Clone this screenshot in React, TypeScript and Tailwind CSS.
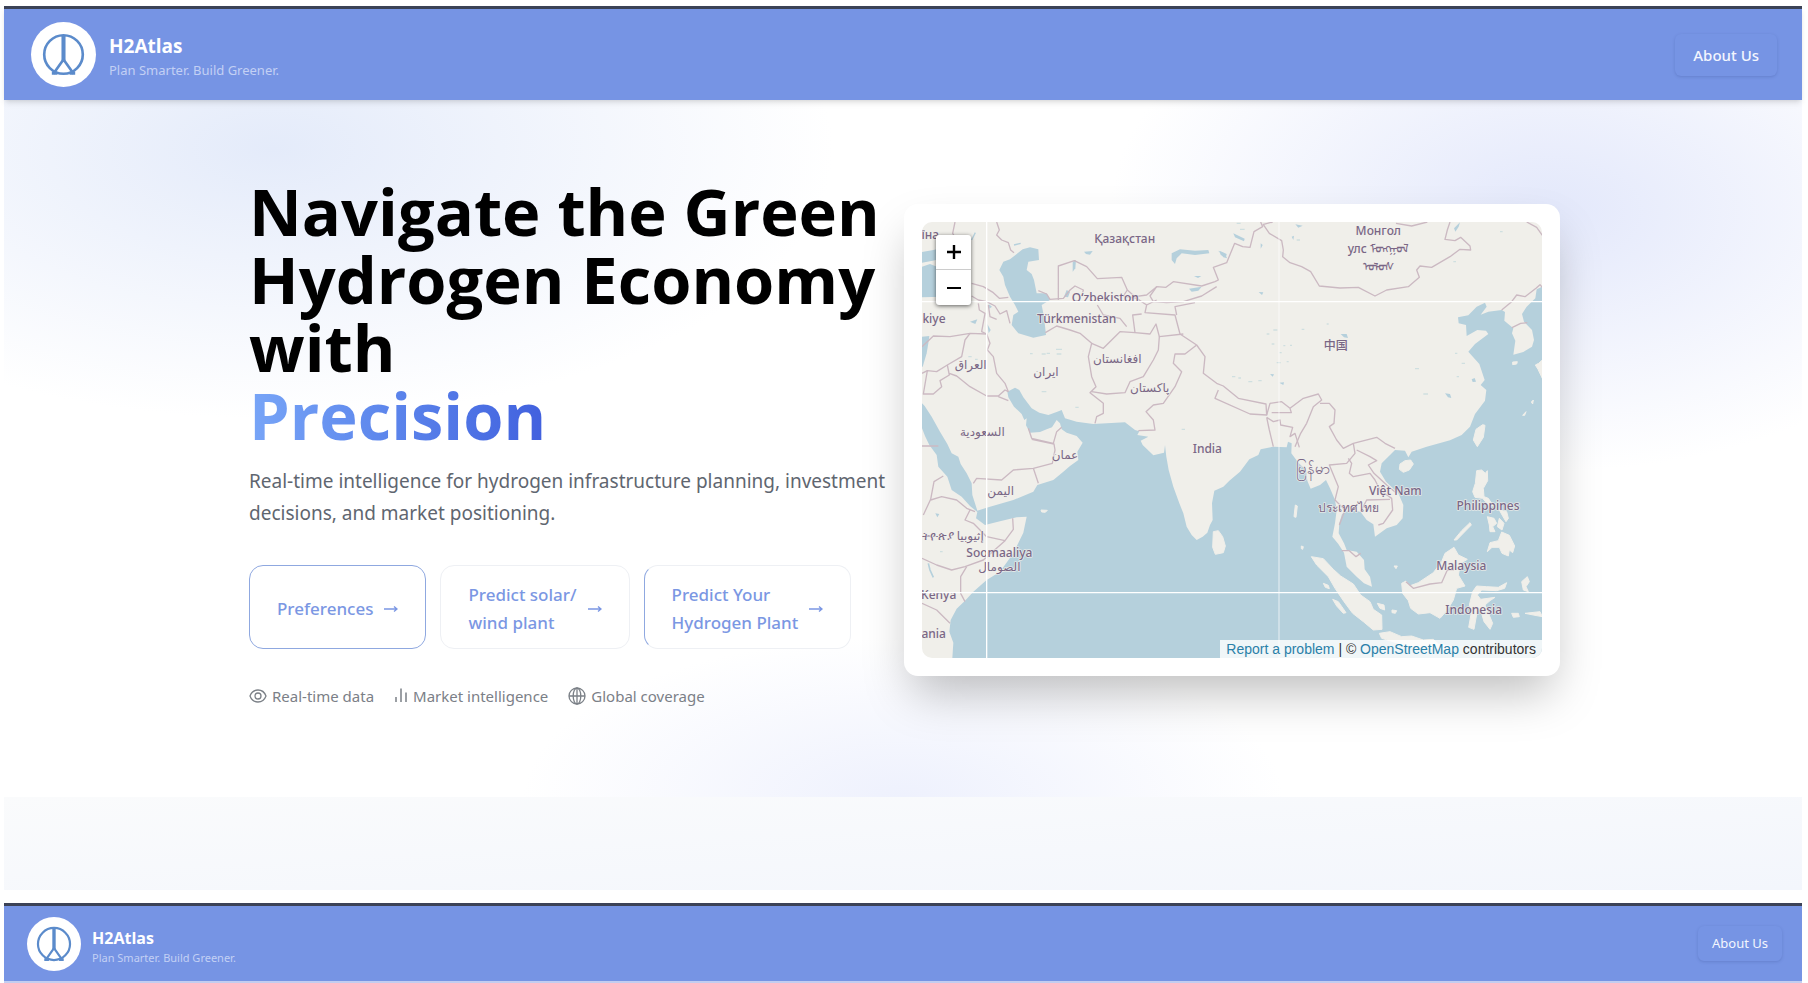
import React from "react";

const WATER = "#b5d0dc";
const LAND = "#f0efea";

type Label = { x: number; y: number; text: string; size?: number };

const labels: Label[] = [
  { x: 121, y: 148, text: "їна" },
  { x: 704, y: 160, text: "Қазақстан" },
  { x: 1465, y: 135, text: "Монгол" },
  { x: 1465, y: 190, text: "улс ᠮᠣᠩᠭᠣᠯ" },
  { x: 1465, y: 242, text: "ᠤᠯᠤᠰ" },
  { x: 646, y: 337, text: "Oʻzbekiston" },
  { x: 560, y: 398, text: "Türkmenistan" },
  { x: 132, y: 398, text: "kiye" },
  { x: 242, y: 537, text: "العراق" },
  { x: 468, y: 558, text: "ایران" },
  { x: 682, y: 520, text: "افغانستان" },
  { x: 779, y: 605, text: "پاکستان" },
  { x: 277, y: 737, text: "السعودية" },
  { x: 952, y: 788, text: "India" },
  { x: 1337, y: 480, text: "中国" },
  { x: 525, y: 808, text: "عمان" },
  { x: 332, y: 914, text: "اليمن" },
  { x: 188, y: 1050, text: "ትዮጵያ إثيوبيا" },
  { x: 328, y: 1101, text: "Soomaaliya" },
  { x: 328, y: 1143, text: "الصومال" },
  { x: 146, y: 1227, text: "Kenya" },
  { x: 131, y: 1345, text: "ania" },
  { x: 1270, y: 852, text: "မြန်မာ", size: 44 },
  { x: 1516, y: 914, text: "Việt Nam" },
  { x: 1374, y: 967, text: "ประเทศไทย" },
  { x: 1794, y: 961, text: "Philippines" },
  { x: 1714, y: 1141, text: "Malaysia" },
  { x: 1751, y: 1271, text: "Indonesia" },
];

const waterShapes = [
  // Indian Ocean, Red Sea, Persian Gulf and western Pacific
  "M96 640 L104 648 125 680 150 725 172 762 185 790 205 800 212 822 230 850 245 880 247 915 262 962 300 950 370 930 430 905 442 885 490 870 520 845 540 828 565 810 562 785 578 758 560 738 530 728 515 718 510 700 500 690 486 712 470 718 450 726 420 728 408 706 410 685 403 690 395 672 372 650 355 622 352 605 375 593 388 600 400 622 425 655 448 668 475 675 500 666 515 660 525 685 560 695 610 702 650 700 705 697 735 720 748 724 742 735 775 740 752 752 758 765 790 796 822 788 825 765 829 800 836 840 850 890 868 940 880 970 890 1010 905 1035 920 1050 938 1040 952 1028 960 1005 968 990 966 940 973 902 1000 890 1018 872 1050 845 1078 808 1105 795 1112 778 1150 770 1190 772 1194 755 1205 760 1204 790 1225 818 1248 840 1252 872 1262 896 1290 885 1308 870 1320 895 1335 930 1340 960 1335 1000 1327 1040 1345 1062 1362 1088 1370 1130 1400 1160 1422 1180 1446 1190 1440 1160 1424 1138 1422 1110 1400 1085 1370 1080 1362 1060 1346 1030 1348 1000 1356 972 1380 958 1412 966 1430 990 1450 1003 1455 1040 1490 1015 1520 1005 1538 985 1540 945 1525 910 1488 875 1470 845 1475 820 1500 795 1515 780 1545 782 1555 802 1565 785 1610 770 1680 751 1715 735 1740 710 1755 672 1785 632 1789 600 1772 585 1784 570 1768 522 1735 485 1755 462 1795 432 1788 422 1762 420 1730 438 1728 405 1706 400 1704 382 1735 376 1760 350 1785 338 1790 350 1772 374 1795 365 1835 360 1845 366 1843 392 1870 415 1866 430 1876 452 1870 494 1900 486 1926 470 1932 450 1926 420 1902 395 1896 372 1910 350 1936 325 1940 298 1957 290 L1957 1404 187 1404 190 1358 178 1325 182 1290 200 1256 225 1232 250 1205 290 1170 330 1145 370 1090 400 1028 410 980 380 982 330 994 285 1005 258 985 262 966 240 948 215 920 185 900 172 860 145 830 140 795 118 765 105 738 96 715Z",
  // Caspian Sea
  "M398 178 L420 172 445 178 447 210 415 215 410 240 425 252 432 270 440 310 470 310 480 330 455 345 462 380 468 435 430 443 385 430 365 405 370 375 385 365 375 345 360 320 345 285 340 260 328 240 340 215 360 208Z",
  // Black Sea and Mediterranean
  "M96 186 L130 180 155 175 160 205 128 212 96 218Z",
  "M96 230 L120 222 190 250 240 285 215 312 160 320 96 322Z",
  "M96 440 L118 438 115 460 110 490 98 530 96 530Z",
  // Lakes
  "M845 190 L870 178 915 182 955 180 958 190 915 195 875 190 860 205 855 222 845 210Z",
  "M897 296 L935 290 925 302 905 305Z",
  "M548 215 L558 210 556 235 548 245Z",
  "M582 185 L608 183 600 194 588 192Z",
  "M522 320 L530 300 540 306 534 322Z",
  "M985 182 L1000 188 1012 205 1000 202Z",
  "M1030 130 L1064 146 1062 154 1035 142Z",
  "M1692 115 L1710 97 1706 110 1696 125Z",
  "M1352 432 L1370 432 1374 444 1362 442Z",
  "M1216 103 L1238 107 1225 113Z",
  "M240 395 L262 388 256 402Z",
  "M1205 140 L1212 137 1210 150Z",
  "M1112 160 L1118 165 1112 176Z",
  "M990 183 L1010 192 1008 202 992 195Z",
  "M1745 568 L1754 564 1758 575 1748 576Z",
  "M1665 610 L1680 612 1684 624 1674 622Z",
  "M1140 552 L1152 553 1148 560Z",
  "M1168 578 L1182 577 1180 585Z",
  "M912 258 L934 258 924 264Z",
  "M1106 306 L1120 307 1116 315Z",
  "M136 970 L148 972 142 982Z",
  "M296 342 L306 350 298 356Z",
  "M292 402 L302 420 296 430Z",
];

const islandShapes = [
  "M970 1025 L985 1022 998 1040 1006 1068 1000 1088 976 1093 968 1072Z",
  "M1758 718 L1778 704 1785 706 1780 742 1762 770 1750 750Z",
  "M1530 822 L1545 812 1562 810 1570 822 1558 840 1540 847 1528 838Z",
  "M1760 842 L1775 840 1786 850 1792 842 1793 872 1780 895 1782 920 1795 925 1810 948 1795 945 1778 925 1755 922 1748 905 1756 880Z",
  "M1835 1026 L1858 1036 1874 1068 1868 1088 1858 1080 1855 1098 1836 1090 1828 1072 1806 1072 1792 1085 1800 1058 1825 1052Z",
  "M1792 980 L1812 985 1820 1000 1808 1010 1815 1025 1800 1025 1798 1005Z",
  "M1828 985 L1842 1000 1836 1020 1822 1010Z",
  "M1828 960 L1850 965 1855 985 1848 995 1838 978Z",
  "M1740 998 L1744 1005 1700 1050 1692 1050 1715 1022Z",
  "M1264 1100 L1300 1106 1330 1138 1352 1158 1390 1182 1412 1215 1440 1235 1450 1258 1475 1275 1476 1318 1450 1320 1420 1295 1388 1270 1362 1235 1335 1195 1315 1160 1280 1125Z",
  "M1468 1330 L1500 1325 1535 1340 1565 1338 1600 1350 1630 1348 1645 1362 1690 1370 1688 1380 1560 1370 1475 1345Z",
  "M1535 1180 L1548 1173 1558 1188 1585 1178 1630 1148 1655 1115 1665 1090 1692 1072 1705 1095 1732 1108 1712 1120 1705 1155 1725 1188 1700 1195 1690 1230 1672 1260 1650 1285 1620 1268 1585 1272 1562 1255 1555 1232 1538 1210Z",
  "M1748 1205 L1760 1188 1790 1190 1825 1192 1850 1178 1844 1195 1820 1202 1775 1200 1762 1215 1772 1228 1815 1222 1800 1232 1785 1245 1808 1300 1800 1318 1782 1295 1772 1260 1762 1262 1752 1318 1736 1312 1745 1262 1738 1245Z",
  "M1462 1240 L1482 1245 1484 1260 1470 1255Z",
  "M1506 1260 L1520 1262 1516 1270 1506 1268Z",
  "M1895 1175 L1912 1160 1918 1175 1908 1190 1915 1205 1900 1200Z",
  "M1865 1270 L1885 1270 1888 1280 1870 1282Z",
  "M1905 1270 L1950 1265 1957 1280 1935 1276Z",
  "M1300 1180 L1315 1186 1318 1196 1306 1192Z",
  "M1328 1228 L1345 1235 1368 1268 1360 1270 1340 1248Z",
  "M1216 945 L1222 948 1218 982 1212 980Z",
  "M1234 1068 L1240 1070 1238 1078 1234 1076Z",
  "M1512 1128 L1522 1128 1518 1136Z",
  "M1868 516 L1882 515 1880 522 1868 524Z",
  "M1957 510 L1946 520 1936 525 1944 538 1957 565Z",
  "M1924 636 L1930 630 1928 642Z",
  "M1898 676 L1908 665 1904 676Z",
  "M453 960 L472 961 466 967 455 966Z",
];

const borders = [
  "M195 96 L188 130 200 150",
  "M320 96 L328 120 320 135 335 150 355 158 362 180 372 188",
  "M505 330 L505 228 553 212 590 230 622 266 695 262 712 300 735 320 770 315 800 290 828 292 850 275 935 288 975 275 985 270 970 232 1010 218 1034 160 1058 170 1080 172 1092 125 1118 110 1112 96",
  "M445 302 L470 312 480 328 520 325 540 300 555 288 580 300 575 320",
  "M1118 104 L1148 96 M1120 104 L1138 130 1175 152 1180 180 1178 200 1200 218 1235 230 1262 245 1288 288 1350 294 1405 292 1455 318 1490 300 1555 290 1588 262 1580 240 1590 228 1625 232 1680 200 1710 178 1742 180 1740 168 1712 142 1695 152 1665 148 1672 120 1680 96",
  "M1518 100 L1565 108 1612 96 M1910 96 L1940 112 1957 136",
  "M1835 360 L1865 335 1880 315 1905 320 1938 295 1950 284 1957 292",
  "M1866 413 L1892 400 1912 398",
  "M245 280 L280 290 310 308 328 325 355 322 M245 318 L265 330 290 335 315 348 330 372 350 362 360 400 M265 340 L268 360 285 370 275 425 290 432 M295 345 L300 380 320 388",
  "M96 470 L130 438 180 440 240 430 290 432 300 460 292 480 310 500 320 550 345 580 355 605",
  "M240 430 L225 450 215 500 172 525 140 545 112 542 96 550",
  "M112 542 L100 612 130 612 155 590 150 572 178 555 172 525 M178 550 L200 558 240 590 290 618 325 618 345 600 355 605 M325 620 L355 632",
  "M466 428 L500 408 540 420 570 430 605 460 595 500 605 560 618 590 600 608 640 640 640 670 620 680 615 700",
  "M605 460 L640 475 665 450 690 425 735 428 780 432 798 402 808 440 880 432",
  "M712 300 L700 318 740 325 770 345 800 330 M770 345 L765 368 855 375 870 432 920 465",
  "M735 428 L728 375 755 372 M622 345 L640 375 690 385 710 410",
  "M800 290 L780 318 790 335 830 338 880 335 935 318 980 290",
  "M860 375 L855 350 915 338",
  "M605 605 L650 612 705 608 720 575 760 560 790 510 805 480 808 440",
  "M920 465 L885 492 855 492 850 520 875 545 855 590 820 640 790 645 768 665 790 690 795 720 745 722",
  "M920 465 L945 500 940 550 980 580 1000 588 1045 625 1128 642 1130 675 1080 672 975 625 985 600",
  "M1130 675 L1140 640 1175 635 1200 655 1204 668 1145 668",
  "M1200 655 L1240 625 1285 612 1295 630 1270 650 1250 700 1232 730 1215 770",
  "M1130 682 L1150 695 1170 690 1172 705 1208 712 1200 740 1215 730 1228 772 M1130 682 L1138 720 1150 770",
  "M1290 640 L1318 640 1335 660 1332 700 1318 710 1340 750 1360 775 1390 760 1460 742 1485 760 1515 775",
  "M1390 760 L1395 790 1370 820 1318 825 1345 890 1335 930 1365 960 1348 1005",
  "M1375 805 L1385 820 1378 850 1390 860 1440 850 1455 870 1470 900 1505 925 1508 960 1480 1000 1465 1005",
  "M1400 780 L1440 800 1460 812 1435 825 1452 850 1490 885 1520 910 M1412 965 L1430 930 1500 928",
  "M1355 1082 L1378 1082 1398 1100 1412 1090",
  "M1548 1175 L1570 1195 1620 1182 1655 1178 1672 1140 1692 1140",
  "M415 715 L425 745 490 760 500 725 515 712 M425 748 L492 762 495 780 487 820 430 835 370 840 335 870 260 865 250 880",
  "M430 835 L445 880",
  "M96 768 L145 768 M160 858 L132 875 122 928 100 975",
  "M122 930 L155 920 200 930 230 955 255 965 M240 960 L225 990 250 1000 290 1040 345 1052 370 1018 368 985",
  "M345 1052 L280 1110 225 1130 185 1140 140 1125 96 1105",
  "M230 1130 L212 1160 212 1210 225 1235 M96 1240 L140 1260 180 1300",
];

const flecks =
  "M1130 432h8 M1150 420h12 M1145 462h8 M1180 467h6 M1200 466h6 M1168 488h7 M1160 518h12 M1190 515h6 M1026 560h10 M1045 564h8 M1075 575h12 M1105 572h10 M1235 418h8 M1310 402h6 M1695 490h7 M1715 520h10 M1700 560h7 M1575 536h12 M1600 612h14 M470 490h10 M498 478h18 M500 492h14 M455 492h12 M420 491h8 M455 605h14 M556 652h10 M235 500h10 M255 508h8 M1690 215h8 M1830 125h8 M875 718h10 M150 1085h8 M1040 100h12 M1050 118h14 M1220 150h10";

function MapDrawing() {
  return (
    <svg viewBox="96 96 1860 1308" className="block h-auto w-full" role="img" aria-label="Map of Asia">
      <rect x="96" y="96" width="1861" height="1309" fill={LAND} />
      {waterShapes.map((d, i) => (
        <path key={i} d={d} fill={WATER} strokeLinejoin="round" />
      ))}
      {islandShapes.map((d, i) => (
        <path key={i} d={d} fill={LAND} stroke={LAND} strokeWidth="3" strokeLinejoin="round" />
      ))}
      <path d="M115 1120 L120 1140 130 1162" fill="none" stroke={WATER} strokeWidth="5" />
      <path d="M372 165 L392 160 M245 150 L256 128" fill="none" stroke={WATER} strokeWidth="4" />
      <path d={flecks} fill="none" stroke="#cfdfe0" strokeWidth="4" />
      {borders.map((d, i) => (
        <path key={i} d={d} fill="none" stroke="#cbb9c2" strokeWidth="4" strokeLinejoin="round" />
      ))}
      <g fill="#7a6786" stroke={LAND} strokeOpacity="0.8" strokeWidth="5" strokeLinejoin="round" textAnchor="middle">
        {labels.map((l) => (
          <text
            key={l.text}
            x={l.x}
            y={l.y}
            fontSize={l.size ?? 36}
            paintOrder="stroke"
            fontWeight="500"
            fontFamily="'Noto Sans', 'DejaVu Sans', 'Noto Sans CJK SC', sans-serif"
          >
            {l.text}
          </text>
        ))}
      </g>
      <path d="M290 96V1404 M96 335H1957 M96 1208H1957" stroke="#fff" strokeWidth="4" />
      <path d="M1167 96V1404" stroke="#fff" strokeOpacity="0.7" strokeWidth="3" />
    </svg>
  );
}

function Logo({ className }: { className: string }) {
  return (
    <span className={`${className} block shrink-0 rounded-full bg-white`}>
      <svg viewBox="0 0 64 64" className="h-full w-full" fill="none" stroke="#5b8bcb" aria-hidden="true">
        <circle cx="32" cy="32" r="19" strokeWidth="2.600" />
        <path d="M32 13V38" strokeWidth="4" />
        <path d="M32 37L22 51M32 37L42 51" strokeWidth="2.600" />
        <path d="M20.500 50.500H26M38 50.500H43.500" strokeWidth="3" />
      </svg>
    </span>
  );
}

function Header({ compact = false }: { compact?: boolean }) {
  return (
    <header
      className={`relative z-10 flex items-center justify-between border-t-[3px] border-[#3b4256] bg-[#7694e4] ${
        compact ? "h-[78px] pr-5 pl-[23px]" : "h-[94px] pr-[25px] pl-[27px] shadow-md"
      }`}
    >
      <div className={`flex items-center ${compact ? "gap-[11px]" : "gap-[13px]"}`}>
        <Logo className={compact ? "size-[54px]" : "size-[65px]"} />
        <div className={compact ? "pt-[6px]" : "pt-[5px]"}>
          <p
            className={`font-['Open_Sans','Noto_Sans',sans-serif] font-bold text-white ${
              compact ? "text-[16px] leading-[22px]" : "text-[19px] leading-[26px]"
            }`}
          >
            H2Atlas
          </p>
          <p className={`text-[#c3d0f4] ${compact ? "text-[11px] leading-[18px]" : "text-[13px] leading-[22px]"}`}>
            Plan Smarter. Build Greener.
          </p>
        </div>
      </div>
      <button
        type="button"
        className={`rounded-md bg-[#7694e4] text-[#f3f6fe] shadow-[0_1px_3px_rgba(50,70,140,0.25)] ${
          compact ? "h-[35px] px-[14px] text-[13px]" : "h-[42px] px-[18px] pt-[2px] text-[15px] font-medium"
        }`}
      >
        About Us
      </button>
    </header>
  );
}

function EyeIcon() {
  return (
    <svg viewBox="0 0 18 18" className="size-[18px]" fill="none" stroke="currentColor" strokeWidth="1.300" aria-hidden="true">
      <path d="M1 9C2.500 5 5.500 3 9 3s6.500 2 8 6c-1.500 4-4.500 6-8 6S2.500 13 1 9Z" />
      <circle cx="9" cy="9" r="3" />
    </svg>
  );
}

function BarsIcon() {
  return (
    <svg viewBox="0 0 14 18" className="h-[18px] w-[14px]" fill="none" stroke="currentColor" strokeWidth="1.500" aria-hidden="true">
      <path d="M2 15V10M7 15V1.500M12 15V5.500" />
    </svg>
  );
}

function GlobeIcon() {
  return (
    <svg viewBox="0 0 18 18" className="size-[18px]" fill="none" stroke="currentColor" strokeWidth="1.300" aria-hidden="true">
      <circle cx="9" cy="9" r="8" />
      <ellipse cx="9" cy="9" rx="3.800" ry="8" />
      <path d="M1 9H17M9 1V17" />
    </svg>
  );
}

function Action({ className, children }: { className: string; children: React.ReactNode }) {
  return (
    <button
      type="button"
      className={`flex h-[84px] items-center gap-[11px] rounded-[14px] border bg-white px-[27px] pt-[4px] text-left text-[17px] leading-[28px] font-medium text-[#7b97e3] ${className}`}
    >
      <span>{children}</span>
      <svg viewBox="0 0 14 10" className="h-[10px] w-[14px]" fill="none" stroke="currentColor" strokeWidth="1.400" aria-hidden="true">
        <path d="M0 5H13M10 2.500L13 5L10 7.500" />
      </svg>
    </button>
  );
}

function Feature({ icon, children }: { icon: React.ReactNode; children: React.ReactNode }) {
  return (
    <li className="flex items-center gap-[5px]">
      {icon}
      {children}
    </li>
  );
}

export default function App() {
  return (
    <div className="bg-white pt-[6px] pr-[6px] pl-1 font-['Noto_Sans','Open_Sans',sans-serif]">
      <Header />
      <main>
        <section className="bg-white bg-[radial-gradient(ellipse_560px_270px_at_15%_7%,#e4ebfa,transparent),radial-gradient(ellipse_440px_260px_at_86%_16%,#e3e8fb,transparent),radial-gradient(ellipse_380px_160px_at_50%_100%,#eef1fd,transparent)] pt-[77px] pr-6 pb-[89px] pl-[26px]">
          <div className="mx-auto grid max-w-[1312px] grid-cols-2 items-center">
            <div className="pl-px">
              <h1 className="font-['Open_Sans','Noto_Sans',sans-serif] text-[65px] leading-[68px] font-bold text-black">
                Navigate the Green Hydrogen Economy with
                <span className="block w-fit bg-linear-to-r from-[#78a5f7] to-[#4160de] bg-clip-text text-transparent">
                  Precision
                </span>
              </h1>
              <p className="mt-4 text-[19px] leading-[32px] text-[#5f6670]">
                Real-time intelligence for hydrogen infrastructure planning, investment decisions, and market positioning.
              </p>
              <div className="mt-[36px] flex gap-[14px]">
                <Action className="border-[#8fa8e0]">Preferences</Action>
                <Action className="border-[#eef0f4]">
                  Predict solar/
                  <br />
                  wind plant
                </Action>
                <Action className="border-[#eef0f4] border-l-[#8fa8e0]">
                  Predict Your
                  <br />
                  Hydrogen Plant
                </Action>
              </div>
              <ul className="mt-[35px] flex gap-5 text-[15px] leading-6 text-[#7b8087]">
                <Feature icon={<EyeIcon />}>Real-time data</Feature>
                <Feature icon={<BarsIcon />}>Market intelligence</Feature>
                <Feature icon={<GlobeIcon />}>Global coverage</Feature>
              </ul>
            </div>
            <div className="pb-[5px]">
              <div className="rounded-[14px] bg-white p-[18px] shadow-[0_24px_48px_-8px_rgba(0,0,0,0.26)]">
                <div className="relative overflow-hidden rounded-[10px]">
                  <MapDrawing />
                  <div className="absolute top-[13px] left-[14px] flex w-[35px] flex-col overflow-hidden rounded-[3px] bg-white shadow-[0_1px_4px_rgba(0,0,0,0.6)]">
                    <button
                      type="button"
                      aria-label="Zoom in"
                      className="flex h-[35px] items-center justify-center border-b border-[#ccc] text-black"
                    >
                      <svg viewBox="0 0 14 14" className="size-[14px]" stroke="currentColor" strokeWidth="2.400" aria-hidden="true">
                        <path d="M0 7H14M7 0V14" />
                      </svg>
                    </button>
                    <button type="button" aria-label="Zoom out" className="flex h-[35px] items-center justify-center text-black">
                      <svg viewBox="0 0 14 14" className="size-[14px]" stroke="currentColor" strokeWidth="2" aria-hidden="true">
                        <path d="M0 7H14" />
                      </svg>
                    </button>
                  </div>
                  <p className="absolute right-0 bottom-0 bg-white/80 px-[6px] font-['Liberation_Sans',Arial,sans-serif] text-[14px] leading-[18px] text-[#333]">
                    <a href="#report" className="text-[#2a80a8]">
                      Report a problem
                    </a>{" "}
                    | ©{" "}
                    <a href="#osm" className="text-[#2a80a8]">
                      OpenStreetMap
                    </a>{" "}
                    contributors
                  </p>
                </div>
              </div>
            </div>
          </div>
        </section>
        <div className="h-[93px] bg-linear-to-br from-[#fafbfc] to-[#f3f6fc]" />
      </main>
      <div className="mt-[13px] border-b-2 border-[#c3cdf0]">
        <Header compact />
      </div>
    </div>
  );
}
